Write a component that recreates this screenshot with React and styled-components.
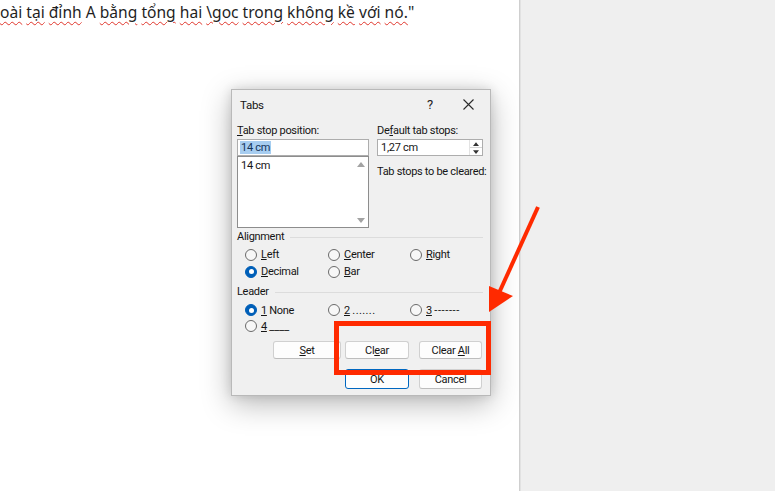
import styled, { createGlobalStyle } from "styled-components";

const GlobalStyle = createGlobalStyle`
  html, body {
    margin: 0;
    padding: 0;
    background: #ffffff;
  }
  body {
    font-family: "Noto Sans", "Open Sans", sans-serif;
  }
`;

const Screen = styled.div`
  position: relative;
  width: 775px;
  height: 491px;
  display: flex;
  overflow: hidden;
`;

const DocPage = styled.div`
  width: 520px;
  background: #ffffff;
  border-right: 1px solid #cfcfcf;
  padding-top: 2px;
  box-sizing: border-box;
`;

const Gutter = styled.div`
  flex: 1;
  background: #efefef;
  border-left: 1px solid #e2e2e2;
`;

const DocLine = styled.div`
  font-size: 15.6px;
  color: #1f1f1f;
  white-space: nowrap;
  line-height: 20px;
`;

const Typo = styled.span`
  text-decoration: underline wavy #e0352b;
  text-decoration-thickness: 1px;
  text-underline-offset: 3px;
`;

const Dialog = styled.div`
  position: absolute;
  left: 231px;
  top: 89px;
  width: 260px;
  height: 307px;
  box-sizing: border-box;
  background: #f0f0f0;
  border: 1px solid #b9b9b9;
  box-shadow: 0 8px 28px rgba(0, 0, 0, 0.28), 0 0 10px rgba(0, 0, 0, 0.12);
  display: flex;
  flex-direction: column;
  font-family: Roboto, "Liberation Sans", sans-serif;
  font-size: 11px;
  letter-spacing: -0.3px;
  color: #151515;
`;

const TitleBar = styled.div`
  height: 29px;
  display: flex;
  align-items: center;
  padding-left: 8px;
`;

const Title = styled.div`
  flex: 1;
  font-size: 11.5px;
`;

const TitleButton = styled.div`
  width: ${(p) => p.$w}px;
  display: flex;
  justify-content: center;
  align-items: center;
  font-size: 13px;
  color: #222;
`;

const Body = styled.div`
  flex: 1;
  display: flex;
  flex-direction: column;
  padding: 5px 7px 6px 5px;
`;

const TopSection = styled.div`
  display: flex;
  gap: 8px;
`;

const Column = styled.div`
  width: ${(p) => p.$w}px;
  display: flex;
  flex-direction: column;
`;

const Label = styled.div`
  line-height: 14px;
  height: 14px;
  margin-top: ${(p) => p.$mt || 0}px;
  margin-bottom: 1px;
  white-space: nowrap;
`;

const U = styled.span`
  text-decoration: underline;
  text-underline-offset: 1px;
`;

const LeaderMark = styled.span`
  letter-spacing: ${(p) => p.$gap}px;
`;

const TextField = styled.div`
  height: 17px;
  box-sizing: border-box;
  background: #ffffff;
  border: 1px solid #adadad;
  display: flex;
  align-items: center;
  padding-left: 2px;
`;

const Selected = styled.span`
  background: #a7cdf0;
  color: #13345a;
  line-height: 13px;
  padding: 0 1px;
`;

const ListBox = styled.div`
  height: 72px;
  box-sizing: border-box;
  background: #ffffff;
  border: 1px solid #8d8d8d;
  display: flex;
`;

const ListItems = styled.div`
  flex: 1;
  padding: 2px 3px;
  line-height: 13px;
`;

const ScrollBar = styled.div`
  width: 14px;
  display: flex;
  flex-direction: column;
  justify-content: space-between;
  align-items: center;
  padding: 5px 0 4px;
`;

const SpinField = styled(TextField)`
  padding-left: 3px;
  padding-right: 0;
  justify-content: space-between;
`;

const SpinButtons = styled.div`
  width: 12px;
  height: 15px;
  display: flex;
  flex-direction: column;
  border-left: 1px solid #e3e3e3;
`;

const SpinHalf = styled.div`
  flex: 1;
  display: flex;
  align-items: center;
  justify-content: center;
  border-top: ${(p) => (p.$split ? "1px solid #d6d6d6" : "none")};
`;

const GroupHeader = styled.div`
  display: flex;
  align-items: center;
  gap: 6px;
  height: 14px;
  line-height: 14px;
  margin-top: ${(p) => p.$mt}px;
  margin-bottom: ${(p) => p.$mb}px;
  &::after {
    content: "";
    flex: 1;
    height: 1px;
    background: #dcdcdc;
  }
`;

const RadioGrid = styled.div`
  display: grid;
  grid-template-columns: 83px 82px 1fr;
  grid-auto-rows: ${(p) => p.$row}px;
  padding-left: 8px;
`;

const RadioItem = styled.label`
  display: flex;
  align-items: center;
  gap: 4px;
  white-space: nowrap;
`;

const RadioCircle = styled.span`
  width: 12px;
  height: 12px;
  box-sizing: border-box;
  border-radius: 50%;
  flex-shrink: 0;
  display: flex;
  align-items: center;
  justify-content: center;
  background: ${(p) => (p.$on ? "#005fb8" : "#f7f7f7")};
  border: 1px solid ${(p) => (p.$on ? "#005fb8" : "#6a6a6a")};
  &::after {
    content: "";
    width: 5px;
    height: 5px;
    border-radius: 50%;
    background: #ffffff;
    display: ${(p) => (p.$on ? "block" : "none")};
  }
`;

const ButtonRow = styled.div`
  display: flex;
  justify-content: flex-end;
  padding-right: 1px;
  margin-top: ${(p) => p.$mt}px;
`;

const Button = styled.div`
  width: ${(p) => p.$w}px;
  height: ${(p) => p.$h}px;
  margin-left: ${(p) => p.$ml || 0}px;
  box-sizing: border-box;
  background: #fdfdfd;
  border: 1px solid ${(p) => (p.$primary ? "#0067c0" : "#d0d0d0")};
  border-bottom-color: ${(p) => (p.$primary ? "#0067c0" : "#bdbdbd")};
  border-radius: 3px;
  display: flex;
  align-items: center;
  justify-content: center;
  font-size: 11px;
  color: #151515;
  white-space: nowrap;
`;

const Highlight = styled.div`
  position: absolute;
  left: 334px;
  top: 321px;
  width: 157px;
  height: 54px;
  box-sizing: border-box;
  border: 5px solid #ff2a00;
`;

const Overlay = styled.svg`
  position: absolute;
  left: 0;
  top: 0;
  pointer-events: none;
`;

const Radio = ({ on, children }) => (
  <RadioItem>
    <RadioCircle $on={on} />
    <span>{children}</span>
  </RadioItem>
);

const Tri = ({ up, color = "#a3a3a3", w = 8, h = 5 }) => (
  <svg width={w} height={h} viewBox="0 0 8 5">
    <polygon points={up ? "0,5 8,5 4,0" : "0,0 8,0 4,5"} fill={color} />
  </svg>
);

const App = () => (
  <Screen>
    <GlobalStyle />
    <DocPage>
      <DocLine>
        <Typo>oài</Typo> <Typo>tại</Typo> <Typo>đỉnh</Typo> A <Typo>bằng</Typo>{" "}
        <Typo>tổng</Typo> <Typo>hai</Typo> <Typo>\goc</Typo> <Typo>trong</Typo>{" "}
        <Typo>không</Typo> <Typo>kề</Typo> <Typo>với</Typo> <Typo>nó.</Typo>"
      </DocLine>
    </DocPage>
    <Gutter />

    <Dialog>
      <TitleBar>
        <Title>Tabs</Title>
        <TitleButton $w={32}>?</TitleButton>
        <TitleButton $w={44}>
          <svg width="11" height="11" viewBox="0 0 11 11">
            <path d="M0.5 0.5 L10.5 10.5 M10.5 0.5 L0.5 10.5" stroke="#2a2a2a" strokeWidth="1.1" />
          </svg>
        </TitleButton>
      </TitleBar>

      <Body>
        <TopSection>
          <Column $w={132}>
            <Label>
              <U>T</U>ab stop position:
            </Label>
            <TextField>
              <Selected>14 cm</Selected>
            </TextField>
            <ListBox>
              <ListItems>14 cm</ListItems>
              <ScrollBar>
                <Tri up />
                <Tri />
              </ScrollBar>
            </ListBox>
          </Column>
          <Column $w={106}>
            <Label>
              De<U>f</U>ault tab stops:
            </Label>
            <SpinField>
              <span>1,27 cm</span>
              <SpinButtons>
                <SpinHalf>
                  <Tri up color="#333" w={6} h={4} />
                </SpinHalf>
                <SpinHalf $split>
                  <Tri color="#333" w={6} h={4} />
                </SpinHalf>
              </SpinButtons>
            </SpinField>
            <Label $mt={9}>Tab stops to be cleared:</Label>
          </Column>
        </TopSection>

        <GroupHeader $mt={2} $mb={2}>Alignment</GroupHeader>
        <RadioGrid $row={17}>
          <Radio>
            <U>L</U>eft
          </Radio>
          <Radio>
            <U>C</U>enter
          </Radio>
          <Radio>
            <U>R</U>ight
          </Radio>
          <Radio on>
            <U>D</U>ecimal
          </Radio>
          <Radio>
            <U>B</U>ar
          </Radio>
        </RadioGrid>

        <GroupHeader $mt={5} $mb={3}>Leader</GroupHeader>
        <RadioGrid $row={16}>
          <Radio on>
            <U>1</U> None
          </Radio>
          <Radio>
            <U>2</U> <LeaderMark $gap={0.4}>.......</LeaderMark>
          </Radio>
          <Radio>
            <U>3</U> <LeaderMark $gap={0.6}>-------</LeaderMark>
          </Radio>
          <Radio>
            <U>4</U> <LeaderMark $gap={0}>____</LeaderMark>
          </Radio>
        </RadioGrid>

        <ButtonRow $mt={7}>
          <Button $w={68} $h={18}>
            <span>
              <U>S</U>et
            </span>
          </Button>
          <Button $w={64} $h={18} $ml={4}>
            <span>
              Cl<U>e</U>ar
            </span>
          </Button>
          <Button $w={63} $h={18} $ml={10}>
            <span>
              Clear <U>A</U>ll
            </span>
          </Button>
        </ButtonRow>
        <ButtonRow $mt={10}>
          <Button $w={64} $h={20} $primary>
            OK
          </Button>
          <Button $w={63} $h={20} $ml={10}>
            Cancel
          </Button>
        </ButtonRow>
      </Body>
    </Dialog>

    <Highlight />
    <Overlay width="775" height="491" viewBox="0 0 775 491">
      <line x1="538" y1="207" x2="499" y2="293" stroke="#ff2a00" strokeWidth="4" />
      <polygon points="489,286 513,296 489,312" fill="#ff2a00" />
    </Overlay>
  </Screen>
);

export default App;
